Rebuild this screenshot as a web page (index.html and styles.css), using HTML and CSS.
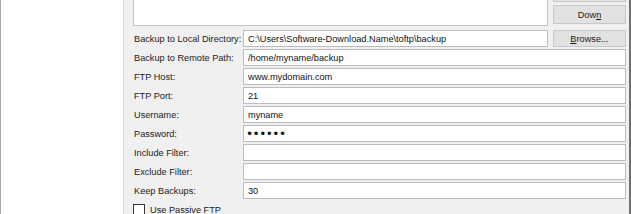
FILE: index.html
```html
<!DOCTYPE html>
<html>
<head>
    <meta charset="UTF-8">
    <title>Backup Settings</title>
    <link rel="stylesheet" href="styles.css">
</head>
<body>
<div id="window">
    <div class="sidebar"></div>
    <div class="panel">
        <div class="form">
            <div class="listbox"></div>
            <div class="button-stack">
                <button class="btn up" aria-label="Up"></button>
                <button class="btn">Dow<u>n</u></button>
            </div>

            <label class="label">Backup to Local Directory:</label>
            <input class="field" type="text" value="C:\Users\Software-Download.Name\toftp\backup" readonly>
            <button class="btn browse"><u>B</u>rowse...</button>

            <label class="label">Backup to Remote Path:</label>
            <input class="field wide" type="text" value="/home/myname/backup" readonly>

            <label class="label">FTP Host:</label>
            <input class="field wide" type="text" value="www.mydomain.com" readonly>

            <label class="label">FTP Port:</label>
            <input class="field wide" type="text" value="21" readonly>

            <label class="label">Username:</label>
            <input class="field wide" type="text" value="myname" readonly>

            <label class="label">Password:</label>
            <input class="field wide password" type="password" value="secret" readonly>

            <label class="label">Include Filter:</label>
            <input class="field wide" type="text" value="" readonly>

            <label class="label">Exclude Filter:</label>
            <input class="field wide" type="text" value="" readonly>

            <label class="label">Keep Backups:</label>
            <input class="field wide" type="text" value="30" readonly>

            <label class="check">
                <span class="box"></span>
                <span>Use Passive FTP</span>
            </label>
        </div>
    </div>
</div>
</body>
</html>
```

FILE: styles.css
```css
html {
    font-family: "Liberation Sans", Arial, sans-serif;
    font-size: 9.2px;
    color: #1b1b1b;
    box-sizing: border-box;
}

*,
*:before,
*:after {
    box-sizing: inherit;
}

body {
    margin: 0;
    width: 631px;
    height: 214px;
    overflow: hidden;
    background-color: #f0f0f0;
}

#window {
    display: flex;
    height: 214px;
}

.sidebar {
    width: 124px;
    flex: none;
    background: white;
    border-left: 1px solid #a9a9a9;
    border-right: 1px solid #dadada;
}

.panel {
    flex: 1;
    padding: 0 3px 0 9px;
    border-right: 2px solid #707070;
}

.form {
    display: grid;
    grid-template-columns: 110px 1fr 78px;
    grid-template-rows: 28px;
    grid-auto-rows: 17px;
    row-gap: 2px;
    align-items: center;
}

.listbox {
    grid-column: 1 / 3;
    align-self: start;
    height: 26px;
    background: white;
    border: 1px solid #c4c4c4;
    border-top: none;
}

.button-stack {
    align-self: start;
    display: flex;
    flex-direction: column;
    gap: 3px;
    padding-left: 5px;
    margin-top: -17px;
}

.btn {
    height: 19px;
    font: inherit;
    color: #1b1b1b;
    background: #e1e1e1;
    border: 1px solid #c8c8c8;
    padding: 0;
}

.browse {
    margin-left: 5px;
    height: 17px;
}

.label {
    white-space: nowrap;
    padding-left: 1px;
}

.field {
    height: 17px;
    font: inherit;
    color: #111;
    background: white;
    border: 1px solid #bdbdbd;
    padding: 0 4px;
    outline: none;
    min-width: 0;
}

.wide {
    grid-column: 2 / 4;
}

.password {
    font-family: "DejaVu Sans", sans-serif;
    font-size: 12px;
    letter-spacing: -0.5px;
    padding-left: 2px;
}

.check {
    grid-column: 1 / 4;
    display: flex;
    align-items: center;
    gap: 5px;
}

.box {
    width: 12px;
    height: 12px;
    border: 1px solid #333;
    background: white;
}
```
